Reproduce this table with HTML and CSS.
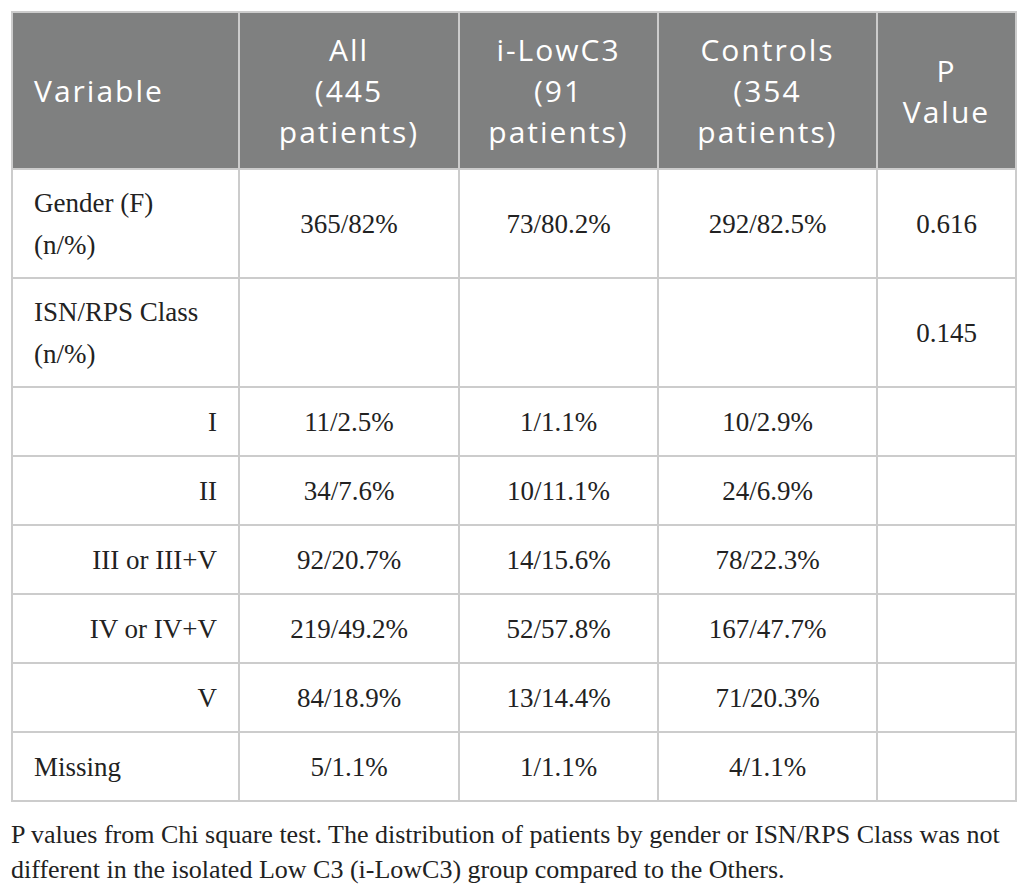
FILE: index.html
```
<!DOCTYPE html>
<html>
<head>
<meta charset="utf-8">
<link rel="stylesheet" href="styles.css">
</head>
<body>
<div class="page">
<table class="data">
<colgroup>
<col class="c1"><col class="c2"><col class="c3"><col class="c4"><col class="c5">
</colgroup>
<thead>
<tr>
<th class="left">Variable</th>
<th>All<br>(445<br>patients)</th>
<th>i-LowC3<br>(91<br>patients)</th>
<th>Controls<br>(354<br>patients)</th>
<th>P<br>Value</th>
</tr>
</thead>
<tbody>
<tr class="two"><td class="left">Gender (F)<br>(n/%)</td><td>365/82%</td><td>73/80.2%</td><td>292/82.5%</td><td>0.616</td></tr>
<tr class="two"><td class="left">ISN/RPS Class<br>(n/%)</td><td></td><td></td><td></td><td>0.145</td></tr>
<tr><td class="right">I</td><td>11/2.5%</td><td>1/1.1%</td><td>10/2.9%</td><td></td></tr>
<tr><td class="right">II</td><td>34/7.6%</td><td>10/11.1%</td><td>24/6.9%</td><td></td></tr>
<tr><td class="right">III or III+V</td><td>92/20.7%</td><td>14/15.6%</td><td>78/22.3%</td><td></td></tr>
<tr><td class="right">IV or IV+V</td><td>219/49.2%</td><td>52/57.8%</td><td>167/47.7%</td><td></td></tr>
<tr><td class="right">V</td><td>84/18.9%</td><td>13/14.4%</td><td>71/20.3%</td><td></td></tr>
<tr><td class="left">Missing</td><td>5/1.1%</td><td>1/1.1%</td><td>4/1.1%</td><td></td></tr>
</tbody>
</table>
<p class="caption">P values from Chi square test. The distribution of patients by gender or ISN/RPS Class was not different in the isolated Low C3 (i-LowC3) group compared to the Others.</p>
</div>
</body>
</html>
```
FILE: styles.css
```
html, body {
  margin: 0;
  padding: 0;
  background: #ffffff;
}
.page {
  padding: 11px;
  width: 1004px;
}
.data {
  border-collapse: collapse;
  table-layout: fixed;
  width: 1004px;
  font-family: "Liberation Serif", "Times New Roman", serif;
  font-size: 27px;
  color: #222222;
}
.c1 { width: 227px; }
.c2 { width: 220px; }
.c3 { width: 199px; }
.c4 { width: 219px; }
.c5 { width: 139px; }
.data th, .data td {
  border: 2px solid #cccccc;
}
.data th {
  background: #7f8080;
  color: #ffffff;
  font-family: "Open Sans", "DejaVu Sans", sans-serif;
  font-weight: 400;
  font-size: 30px;
  letter-spacing: 2px;
  line-height: 41px;
  height: 157px;
  box-sizing: border-box;
  padding: 0 4px;
  text-align: center;
  vertical-align: middle;
}
.data th.left {
  text-align: left;
  padding-left: 21px;
}
.data td {
  line-height: 42px;
  height: 69px;
  box-sizing: border-box;
  padding: 0 21px;
  text-align: center;
  vertical-align: middle;
}
.data tr.two td {
  height: 109px;
}
.data td.left { text-align: left; }
.data td.right { text-align: right; }
.caption {
  margin: 15px 0 0 0;
  font-family: "Liberation Serif", "Times New Roman", serif;
  font-size: 26px;
  line-height: 35px;
  color: #222222;
}
```
